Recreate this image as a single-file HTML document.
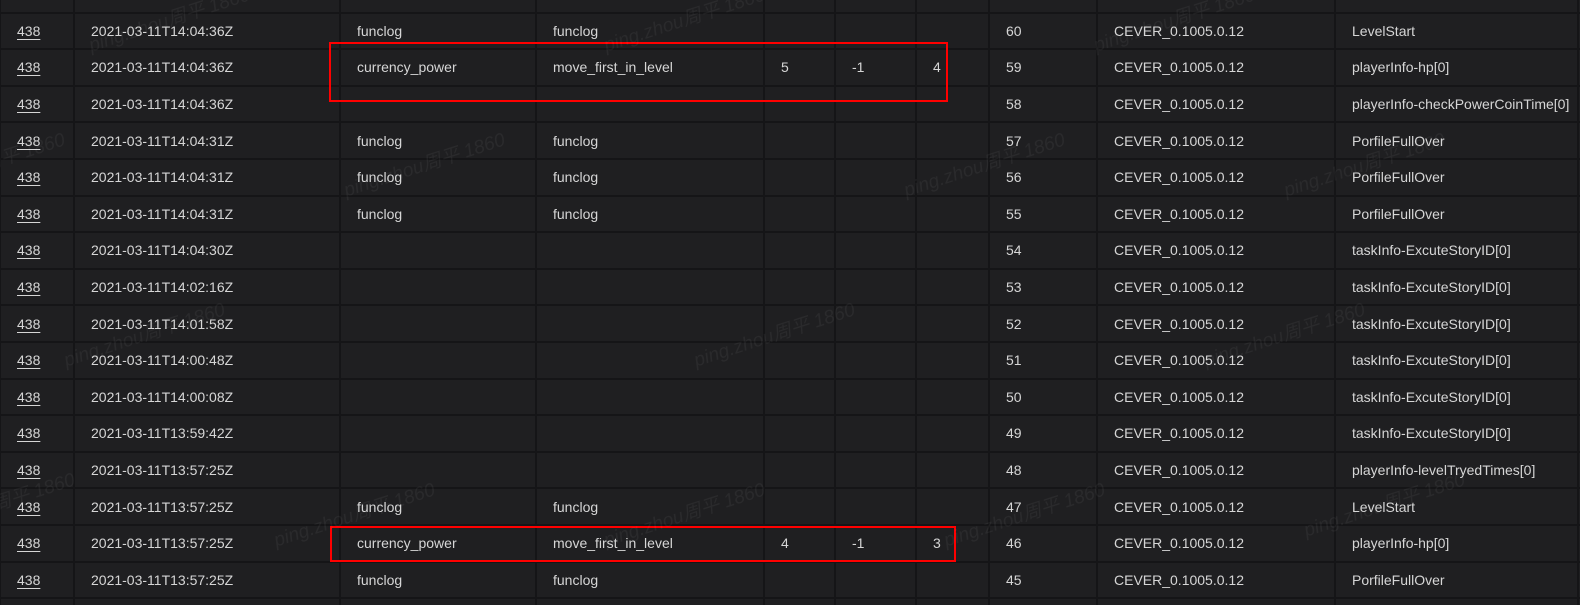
<!DOCTYPE html>
<html><head><meta charset="utf-8">
<style>
html,body{margin:0;padding:0;background:#1f1f21;width:1580px;height:605px;overflow:hidden;position:relative;font-family:"Liberation Sans","Noto Sans CJK SC",sans-serif;}
table{position:absolute;left:-1px;top:-25px;border-collapse:collapse;table-layout:fixed;width:1600px;}
td{border:2px solid #151517;height:34.6px;padding:0 0 0 16px;color:#d6d6d6;font-size:14px;white-space:nowrap;overflow:hidden;background:#1f1f21;}
td a{color:#d6d6d6;text-decoration:underline;text-underline-offset:3px;}
.box{position:absolute;border:2px solid #ff0000;}
.wm{position:absolute;color:rgba(255,255,255,0.05);font-size:19px;transform:rotate(-18deg);white-space:nowrap;font-style:italic;}
</style></head><body>
<table>
<colgroup><col style="width:74px"><col style="width:266px"><col style="width:196px"><col style="width:228px"><col style="width:71px"><col style="width:81px"><col style="width:73px"><col style="width:108px"><col style="width:238px"><col style="width:243px"><col style="width:22px"></colgroup>
<tr><td></td><td></td><td></td><td></td><td></td><td></td><td></td><td></td><td></td><td></td><td></td></tr>
<tr><td><a>438</a></td><td>2021-03-11T14:04:36Z</td><td>funclog</td><td>funclog</td><td></td><td></td><td></td><td>60</td><td>CEVER_0.1005.0.12</td><td>LevelStart</td><td></td></tr>
<tr><td><a>438</a></td><td>2021-03-11T14:04:36Z</td><td>currency_power</td><td>move_first_in_level</td><td>5</td><td>-1</td><td>4</td><td>59</td><td>CEVER_0.1005.0.12</td><td>playerInfo-hp[0]</td><td></td></tr>
<tr><td><a>438</a></td><td>2021-03-11T14:04:36Z</td><td></td><td></td><td></td><td></td><td></td><td>58</td><td>CEVER_0.1005.0.12</td><td>playerInfo-checkPowerCoinTime[0]</td><td></td></tr>
<tr><td><a>438</a></td><td>2021-03-11T14:04:31Z</td><td>funclog</td><td>funclog</td><td></td><td></td><td></td><td>57</td><td>CEVER_0.1005.0.12</td><td>PorfileFullOver</td><td></td></tr>
<tr><td><a>438</a></td><td>2021-03-11T14:04:31Z</td><td>funclog</td><td>funclog</td><td></td><td></td><td></td><td>56</td><td>CEVER_0.1005.0.12</td><td>PorfileFullOver</td><td></td></tr>
<tr><td><a>438</a></td><td>2021-03-11T14:04:31Z</td><td>funclog</td><td>funclog</td><td></td><td></td><td></td><td>55</td><td>CEVER_0.1005.0.12</td><td>PorfileFullOver</td><td></td></tr>
<tr><td><a>438</a></td><td>2021-03-11T14:04:30Z</td><td></td><td></td><td></td><td></td><td></td><td>54</td><td>CEVER_0.1005.0.12</td><td>taskInfo-ExcuteStoryID[0]</td><td></td></tr>
<tr><td><a>438</a></td><td>2021-03-11T14:02:16Z</td><td></td><td></td><td></td><td></td><td></td><td>53</td><td>CEVER_0.1005.0.12</td><td>taskInfo-ExcuteStoryID[0]</td><td></td></tr>
<tr><td><a>438</a></td><td>2021-03-11T14:01:58Z</td><td></td><td></td><td></td><td></td><td></td><td>52</td><td>CEVER_0.1005.0.12</td><td>taskInfo-ExcuteStoryID[0]</td><td></td></tr>
<tr><td><a>438</a></td><td>2021-03-11T14:00:48Z</td><td></td><td></td><td></td><td></td><td></td><td>51</td><td>CEVER_0.1005.0.12</td><td>taskInfo-ExcuteStoryID[0]</td><td></td></tr>
<tr><td><a>438</a></td><td>2021-03-11T14:00:08Z</td><td></td><td></td><td></td><td></td><td></td><td>50</td><td>CEVER_0.1005.0.12</td><td>taskInfo-ExcuteStoryID[0]</td><td></td></tr>
<tr><td><a>438</a></td><td>2021-03-11T13:59:42Z</td><td></td><td></td><td></td><td></td><td></td><td>49</td><td>CEVER_0.1005.0.12</td><td>taskInfo-ExcuteStoryID[0]</td><td></td></tr>
<tr><td><a>438</a></td><td>2021-03-11T13:57:25Z</td><td></td><td></td><td></td><td></td><td></td><td>48</td><td>CEVER_0.1005.0.12</td><td>playerInfo-levelTryedTimes[0]</td><td></td></tr>
<tr><td><a>438</a></td><td>2021-03-11T13:57:25Z</td><td>funclog</td><td>funclog</td><td></td><td></td><td></td><td>47</td><td>CEVER_0.1005.0.12</td><td>LevelStart</td><td></td></tr>
<tr><td><a>438</a></td><td>2021-03-11T13:57:25Z</td><td>currency_power</td><td>move_first_in_level</td><td>4</td><td>-1</td><td>3</td><td>46</td><td>CEVER_0.1005.0.12</td><td>playerInfo-hp[0]</td><td></td></tr>
<tr><td><a>438</a></td><td>2021-03-11T13:57:25Z</td><td>funclog</td><td>funclog</td><td></td><td></td><td></td><td>45</td><td>CEVER_0.1005.0.12</td><td>PorfileFullOver</td><td></td></tr>
<tr><td></td><td></td><td></td><td></td><td></td><td></td><td></td><td></td><td></td><td></td><td></td></tr>
</table>
<div class="box" style="left:329px;top:42px;width:615px;height:56px;"></div>
<div class="box" style="left:330px;top:526px;width:622px;height:32px;"></div>
<div class="wm" style="left:85px;top:5px;">ping.zhou周平 1860</div>
<div class="wm" style="left:600px;top:5px;">ping.zhou周平 1860</div>
<div class="wm" style="left:1090px;top:5px;">ping.zhou周平 1860</div>
<div class="wm" style="left:-100px;top:150px;">ping.zhou周平 1860</div>
<div class="wm" style="left:340px;top:150px;">ping.zhou周平 1860</div>
<div class="wm" style="left:900px;top:150px;">ping.zhou周平 1860</div>
<div class="wm" style="left:1280px;top:150px;">ping.zhou周平 1860</div>
<div class="wm" style="left:60px;top:320px;">ping.zhou周平 1860</div>
<div class="wm" style="left:690px;top:320px;">ping.zhou周平 1860</div>
<div class="wm" style="left:1200px;top:320px;">ping.zhou周平 1860</div>
<div class="wm" style="left:-90px;top:490px;">ping.zhou周平 1860</div>
<div class="wm" style="left:270px;top:500px;">ping.zhou周平 1860</div>
<div class="wm" style="left:600px;top:500px;">ping.zhou周平 1860</div>
<div class="wm" style="left:940px;top:500px;">ping.zhou周平 1860</div>
<div class="wm" style="left:1300px;top:490px;">ping.zhou周平 1860</div>
</body></html>
